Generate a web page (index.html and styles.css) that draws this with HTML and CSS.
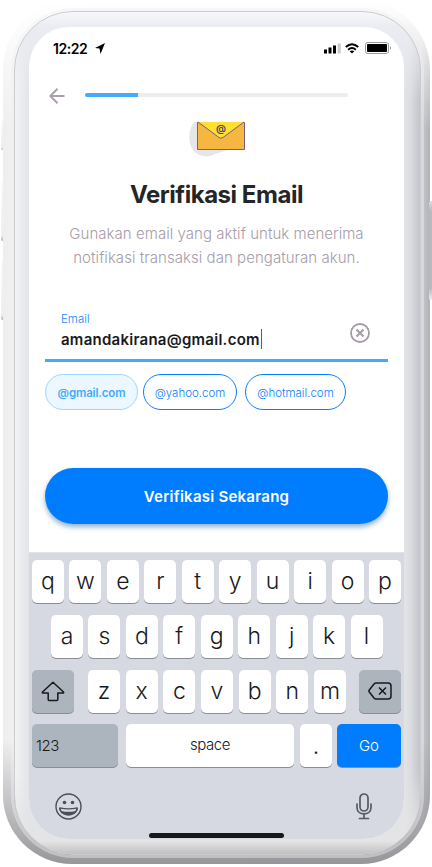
FILE: index.html
```html
<!DOCTYPE html>
<html lang="id">
<head>
<meta charset="utf-8">
<meta name="viewport" content="width=device-width, initial-scale=1">
<title>Verifikasi Email</title>
<link rel="stylesheet" href="styles.css">
</head>
<body>
<div class="phone">
  <i class="side mute"></i><i class="side up"></i><i class="side down"></i><i class="side power"></i>
  <div class="bezel">
  <main class="screen">
    <header class="status">
      <span class="time">12:22</span>
      <svg class="locate" width="10" height="11" viewBox="0 0 10 11"><path d="M10 0 0 5l4.500.600L5.500 11Z"/></svg>
      <svg class="signal" width="17" height="11" viewBox="0 0 17 11"><path d="M0 6.500h3V10.500H0zM4.500 4.500h3v6h-3zM9 2.500h3v8H9z"/><path fill="#c9c9c9" d="M13.700.5h3v10h-3z"/></svg>
      <svg class="wifi" width="14" height="11" viewBox="0 0 14 11"><g fill="none" stroke="#000" stroke-width="2"><path d="M.8 4.100Q7-1.700 13.200 4.100M3.200 6.800Q7 3.300 10.800 6.800"/></g><path d="M4.700 8.300Q7 6.600 9.300 8.300L7 10.600Z"/></svg>
      <svg class="battery" width="27" height="12" viewBox="0 0 27 12"><rect x=".5" y=".5" width="23" height="11" rx="2.500" fill="none" stroke="#999"/><rect x="2" y="2" width="20" height="8" rx="1"/><path fill="#999" d="M25 4q2 2 0 4Z"/></svg>
    </header>
    <nav class="nav">
      <svg width="16" height="16" viewBox="0 0 16 16" fill="none" stroke="#a8a0ab" stroke-width="2"><path d="M15.500 8H1.500M8.500 .8 1.300 8l7.200 7.200"/></svg>
      <div class="progress"><div class="done"></div></div>
    </nav>
    <svg class="mail" width="57" height="36" viewBox="0 0 57 36"><path fill="#e5e6e8" d="M6 1H48v25L26 33C20 37 10 36 4.500 30Q-3 18 2.500 5.500 3.500 2 6 1Z"/><path fill="#f5b742" stroke="#75607f" d="M8.500 1.500h47v27h-47z"/><path fill="#ffdf32" d="M9 1h46L34 16.500q-2 1.400-4 0Z"/><path fill="none" stroke="#75607f" d="m9 1 21 15.500q2 1.400 4 0L55 1"/><text x="32" y="11" text-anchor="middle" class="at">@</text></svg>
    <h1>Verifikasi Email</h1>
    <p class="lead">Gunakan email yang aktif untuk menerima<br>notifikasi transaksi dan pengaturan akun.</p>
    <div class="field">
      <div class="entry"><span class="label">Email</span><span class="value">amandakirana@gmail.com<i class="caret"></i></span></div>
      <svg width="20" height="20" viewBox="0 0 20 20" fill="none" stroke="#a49ba7"><circle cx="10" cy="10" r="9" stroke-width="1.800"/><path stroke-width="2" d="m6.500 6.500 7 7m0-7-7 7"/></svg>
    </div>
    <div class="chips"><span class="chip selected">@gmail.com</span><span class="chip yahoo">@yahoo.com</span><span class="chip hotmail">@hotmail.com</span></div>
    <button class="submit">Verifikasi Sekarang</button>
    <section class="keyboard">
      <div class="row"><b>q</b><b>w</b><b>e</b><b>r</b><b>t</b><b>y</b><b>u</b><b>i</b><b>o</b><b>p</b></div>
      <div class="row second"><b>a</b><b>s</b><b>d</b><b>f</b><b>g</b><b>h</b><b>j</b><b>k</b><b>l</b></div>
      <div class="row">
        <b class="gray"><svg width="24" height="21" viewBox="0 0 24 21" fill="none" stroke="#17191b" stroke-width="1.500" stroke-linejoin="round"><path d="M12 1.200 1.500 11q-.5 1 .7 1h5v6.500q0 1 1 1h7.600q1 0 1-1V12h5q1.200 0 .7-1Z"/></svg></b>
        <div class="letters"><b>z</b><b>x</b><b>c</b><b>v</b><b>b</b><b>n</b><b>m</b></div>
        <b class="gray"><svg width="24" height="18" viewBox="0 0 24 18" fill="none" stroke="#17191b" stroke-width="1.500" stroke-linejoin="round"><path d="M8 1h12q3 0 3 3v10q0 3-3 3H8q-1 0-2-1L1.300 10q-.8-1 0-2L6 2q1-1 2-1Z"/><path d="m11 5.500 7 7m0-7-7 7"/></svg></b>
      </div>
      <div class="row last"><b class="gray num">123</b><b class="space">space</b><b class="dot">.</b><b class="go">Go</b></div>
      <div class="tools">
        <svg width="27" height="27" viewBox="0 0 27 27"><circle cx="13.500" cy="13.500" r="12.500" fill="none" stroke="#4b4e56" stroke-width="1.400"/><g fill="#4b4e56"><circle cx="9.500" cy="9.500" r="1.800"/><circle cx="17.500" cy="9.500" r="1.800"/><path fill-rule="evenodd" d="M5 14.300q8.500 2 17 0c1.400 0 1 1.500.7 2.700C19.500 24.500 7.500 24.500 4.300 17c-.3-1.200-.7-2.700.7-2.700Zm.8 1.500.7 2.100q7 1.900 14 0l.7-2.100q-7.700 1.500-15.400 0Z"/></g></svg>
        <svg width="16" height="27" viewBox="0 0 16 27" fill="none" stroke="#555962" stroke-width="1.700" stroke-linecap="round"><rect x="4" y="1" width="8" height="17" rx="4"/><path d="M1 11v3.500C1 23 15 23 15 14.500V11M8 21v4.500M3.500 25.500h9"/></svg>
      </div>
      <div class="home"></div>
    </section>
  </main>
  </div>
</div>
</body>
</html>
```
FILE: styles.css
```css
* { box-sizing: border-box; }
body { margin: 0; width: 432px; height: 867px; overflow: hidden; background: #fff; font-family: Inter, "Open Sans", sans-serif; }
svg { display: block; flex: none; }

.phone { position: relative; width: 427px; height: 864px; margin-left: 3px; padding: 11px 9px 9px 11px; border-radius: 70px 70px 69px 69px;
  background: linear-gradient(#fff 0, #fffe 12px, #fff0 130px 740px, #97979a 864px), linear-gradient(90deg, #eee 0, #f1f1f2 12px, #e3e4e8 200px, #c9cacf 418px, #b1b2b7 427px); }
.bezel { width: 407px; height: 844px; padding: 15px 14px; border-radius: 59px; border: 1px solid #cbccd0;
  background: linear-gradient(#f6f8fc 0, #eaecf1 15px, #f0f1f400 90px 760px, #e4e4e6 829px, #bbb 844px), linear-gradient(90deg, #f2f3f5, #e2e4e8 14px, #e2e3e7 390px, #dcdde1 395px, #bfc0c5 407px);
  box-shadow: 0 0 0 3px #efeff170; }
.screen { display: flex; flex-direction: column; width: 375px; height: 812px; border-radius: 40px; background: #fff; overflow: hidden; }
.side { position: absolute; left: -2px; width: 2px; background: linear-gradient(#fafafa, #eee 92%, #aaa); border-radius: 2px 0 0 2px; }
.mute { top: 120px; height: 30px; }
.up { top: 181px; height: 60px; }
.down { top: 259px; height: 61px; }
.power { left: 426px; top: 201px; height: 99px; width: 3px; background: linear-gradient(#ddd, #b8b9bd 10% 88%, #eee); }

.status { display: flex; height: 44px; align-items: center; padding: 0 12px 2px 24px; flex: none; }
.time { width: 36px; font-size: 14px; font-weight: 600; letter-spacing: -.45px; white-space: nowrap; }
.locate { margin-left: 6px; }
.signal { margin-left: auto; }
.wifi { margin: 0 6px 0 4px; }
.nav { display: flex; height: 50px; align-items: center; padding-left: 20px; flex: none; }
.progress { width: 263px; height: 4px; margin: -2px 0 0 20px; border-radius: 2px; background: #ededed; overflow: hidden; }
.done { width: 53px; height: 4px; background: #43abff; }
.mail { margin: 0 0 0 160px; }
.at { font: 600 10px Inter, sans-serif; fill: #4b3c60; }
h1 { margin: 18px 0 0; height: 40px; line-height: 40px; text-align: center; font-size: 24px; font-weight: 700; letter-spacing: -.46px; color: #242526; }
.lead { margin: 7px 0 0; height: 47px; line-height: 24px; text-align: center; font-size: 15px; font-weight: 300; letter-spacing: .05px; color: #a59ca8; white-space: nowrap; }

.field { display: flex; width: 343px; height: 52px; margin: 41px 0 0 16px; padding: 0 18px 0 16px; border-bottom: 3px solid #43abff; justify-content: space-between; flex: none; }
.entry { display: flex; flex-direction: column; padding-top: 1px; }
.label { height: 16px; line-height: 16px; font-size: 11.500px; color: #1785fb; font-weight: 350; }
.value { display: flex; align-items: center; height: 24px; font-size: 15px; font-weight: 600; letter-spacing: .26px; color: #18191b; }
.caret { width: 1px; height: 20px; background: #385fb8; margin-left: 1px; }
.field svg { margin-top: 13px; }
.chips { display: flex; height: 36px; margin: 12px 0 0 16px; flex: none; }
.chip { display: flex; align-items: center; justify-content: center; height: 36px; width: 93px; padding-top: 2px; border: 1px solid #087fff; border-radius: 18px; color: #087fff; font-size: 11.500px; font-weight: 350; }
.selected { border-color: #a0d5fd; background: #edf7ff; color: #43abff; font-weight: 600; letter-spacing: -.15px; }
.yahoo { width: 94px; margin-left: 5px; }
.hotmail { width: 101px; margin-left: 8px; }
.submit { width: 343px; height: 56px; flex: none; margin: 58px 0 0 16px; padding: 0; border: 0; border-radius: 28px; background: #007dff; color: #fff; font: 600 15px Inter, sans-serif; letter-spacing: .25px; box-shadow: 0 3px 5px #24659980; }

.keyboard { height: 287px; margin-top: 28px; padding: 7.300px 3px 0; flex: none; background: #d6d9e1; border-top: 1px solid #e2e3e7; }
.row { display: flex; justify-content: space-between; height: 43px; margin-bottom: 11.700px; }
.keyboard b { display: flex; width: 32px; height: 43px; align-items: center; justify-content: center; border-radius: 5px; background: #fff; box-shadow: 0 1px 0 #8b8d91; color: #17191b; font-size: 23px; line-height: 1; font-weight: 300; }
.second { padding: 0 18.500px 0 19px; }
.letters { display: flex; justify-content: space-between; width: 258px; margin-right: -1px; }
.keyboard .gray { width: 42px; background: #acb4be; }
.row.last { justify-content: flex-start; margin-bottom: 0; }
.keyboard .num { width: 86px; justify-content: flex-start; padding: 0 0 1px 4px; font-size: 15px; letter-spacing: -.4px; }
.keyboard .space { width: 168px; margin-left: 8px; font-size: 15px; padding-bottom: 2px; letter-spacing: -.4px; }
.keyboard .dot { margin-left: 6px; padding-top: 1px; }
.keyboard .go { width: 64px; margin-left: 5px; background: #007dff; color: #fff; font-size: 15px; }
.tools { display: flex; justify-content: space-between; padding: 0 29px 0 23px; margin-top: 25.500px; }
.home { width: 135px; height: 5px; margin: 13.500px 0 0 117px; border-radius: 3px; background: #17181a; }
```
